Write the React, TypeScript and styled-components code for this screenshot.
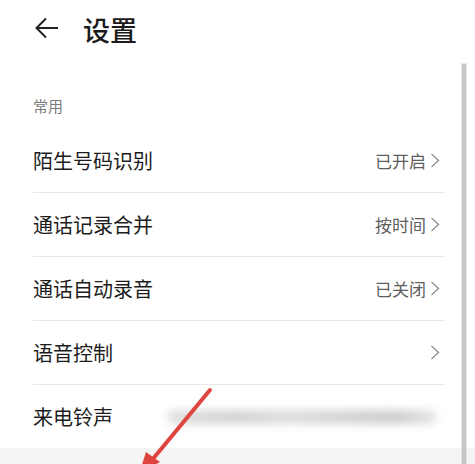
import React from 'react';
import styled, { createGlobalStyle } from 'styled-components';

const GlobalStyle = createGlobalStyle`
  html, body {
    margin: 0;
    padding: 0;
    background: #ffffff;
    font-family: "Noto Sans CJK SC", "Noto Sans", sans-serif;
  }
`;

const Screen = styled.div`
  position: relative;
  width: 475px;
  height: 464px;
  overflow: hidden;
  background: #f4f4f4;
`;

const Header = styled.header`
  height: 58px;
  display: flex;
  align-items: center;
  padding-left: 35px;
  gap: 24px;
  background: #ffffff;
`;

const BackIcon = styled.svg`
  width: 24px;
  height: 24px;
  margin-top: -2px;
`;

const Title = styled.h1`
  margin: 0;
  font-size: 27px;
  font-weight: 500;
  color: #1a1a1a;
  line-height: 1;
`;

const Panel = styled.section`
  background: #ffffff;
  padding: 0 30px 0 33px;
`;

const SectionLabel = styled.div`
  padding: 38px 0 13px;
  font-size: 15px;
  line-height: 20px;
  color: #7a7a7a;
`;

const Row = styled.div<{ $last?: boolean }>`
  height: 63px;
  display: flex;
  align-items: center;
  justify-content: space-between;
  border-bottom: ${(p) => (p.$last ? 'none' : '1px solid #e9e9e9')};
`;

const RowTitle = styled.span`
  font-size: 20px;
  color: #1c1c1c;
  white-space: nowrap;
`;

const RowValue = styled.span`
  display: flex;
  align-items: center;
  gap: 4px;
  font-size: 17px;
  color: #5e5e5e;
  padding-right: 5px;
`;

const Chevron = styled.svg`
  width: 10px;
  height: 15px;
`;

const Blurred = styled.div`
  width: 270px;
  height: 14px;
  margin-right: 8px;
  border-radius: 7px;
  background: linear-gradient(
    90deg,
    #d6d6d6 0%,
    #c4c4c4 25%,
    #d2d2d2 45%,
    #c2c2c2 70%,
    #bdbdbd 85%,
    #dcdcdc 100%
  );
  filter: blur(4px);
  opacity: 0.75;
`;

const ScrollBar = styled.div`
  position: absolute;
  left: 462px;
  top: 64px;
  bottom: 0;
  width: 4px;
  background: #c6c6c6;
  box-shadow: 0 0 0 1px #e6e6e6;
`;

const Annotation = styled.svg`
  position: absolute;
  left: 0;
  top: 0;
  width: 475px;
  height: 464px;
  pointer-events: none;
`;

const ChevronIcon = () => (
  <Chevron viewBox="0 0 10 15">
    <path d="M1.5 1l7 6.5-7 6.5" fill="none" stroke="#8f8f8f" strokeWidth="1.3" />
  </Chevron>
);

const rows = [
  { title: '陌生号码识别', value: '已开启' },
  { title: '通话记录合并', value: '按时间' },
  { title: '通话自动录音', value: '已关闭' },
  { title: '语音控制', value: '' },
];

export default function App() {
  return (
    <Screen>
      <GlobalStyle />
      <Header>
        <BackIcon viewBox="0 0 24 24">
          <path
            d="M23 12H2M11 2.5L1.5 12l9.5 9.5"
            fill="none"
            stroke="#222"
            strokeWidth="2"
          />
        </BackIcon>
        <Title>设置</Title>
      </Header>
      <Panel>
        <SectionLabel>常用</SectionLabel>
        {rows.map((r) => (
          <Row key={r.title}>
            <RowTitle>{r.title}</RowTitle>
            <RowValue>
              {r.value}
              <ChevronIcon />
            </RowValue>
          </Row>
        ))}
        <Row $last>
          <RowTitle>来电铃声</RowTitle>
          <Blurred />
        </Row>
      </Panel>
      <ScrollBar />
      <Annotation viewBox="0 0 475 464">
        <line x1="210" y1="390" x2="152" y2="460" stroke="#e0443f" strokeWidth="4" strokeLinecap="round" />
        <path d="M139 474L146 452L160 462Z" fill="#e0443f" />
      </Annotation>
    </Screen>
  );
}
